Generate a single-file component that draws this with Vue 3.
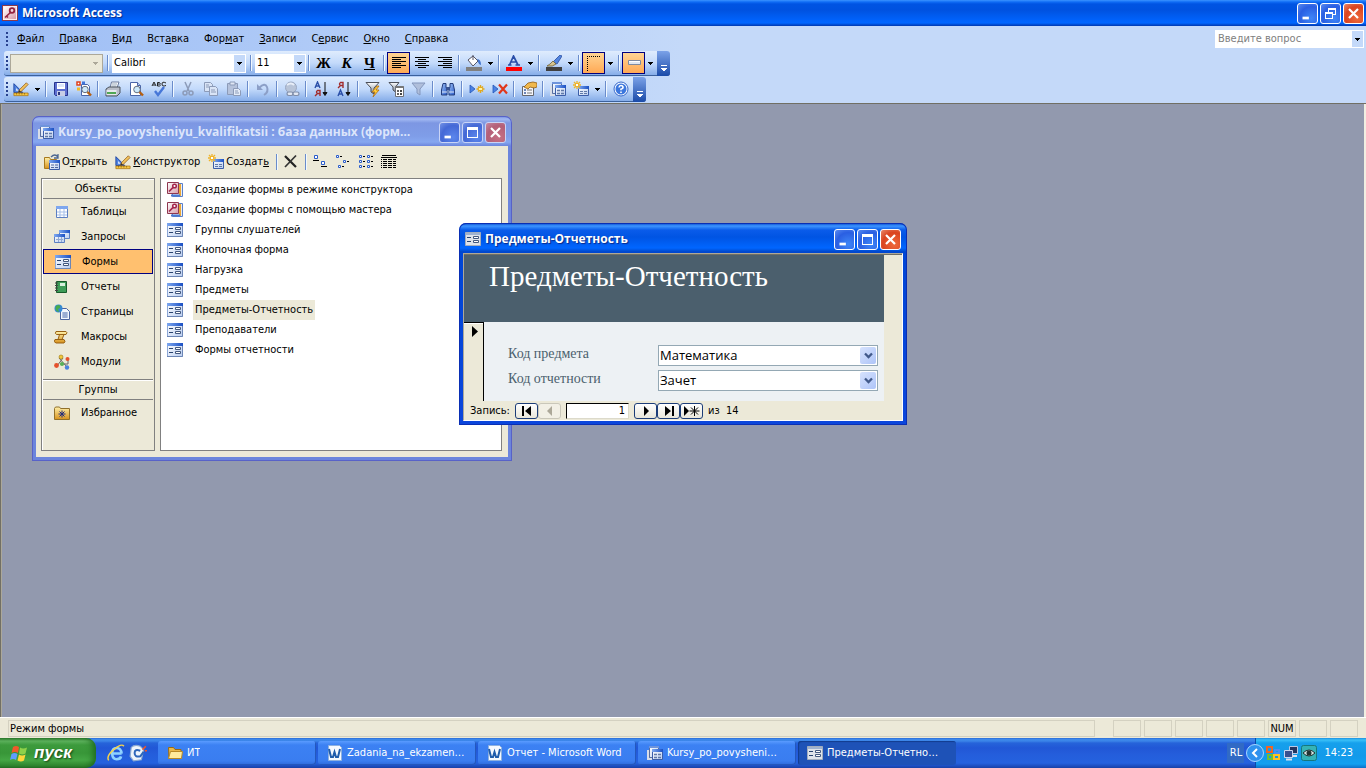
<script setup>
import { ref } from 'vue'

const menu = [
  ['', 'Ф', 'айл'],
  ['', 'П', 'равка'],
  ['', 'В', 'ид'],
  ['Вст', 'а', 'вка'],
  ['Фор', 'м', 'ат'],
  ['', 'З', 'аписи'],
  ['С', 'е', 'рвис'],
  ['', 'О', 'кно'],
  ['', 'С', 'правка'],
]

const standardBar = [
  { icon: 'design', label: 'Вид', arrow: true }, null,
  { icon: 'save', label: 'Сохранить' },
  { icon: 'search', label: 'Поиск файлов' }, null,
  { icon: 'print', label: 'Печать' },
  { icon: 'preview', label: 'Просмотр' },
  { icon: 'spell', label: 'Орфография' }, null,
  { icon: 'cut', label: 'Вырезать', off: true },
  { icon: 'copy', label: 'Копировать', off: true },
  { icon: 'paste', label: 'Вставить', off: true }, null,
  { icon: 'undo', label: 'Отменить', off: true }, null,
  { icon: 'link', label: 'Гиперссылка', off: true }, null,
  { icon: 'sort-asc', label: 'По возрастанию' },
  { icon: 'sort-desc', label: 'По убыванию' }, null,
  { icon: 'filter-sel', label: 'Фильтр по выделенному' },
  { icon: 'filter-form', label: 'Изменить фильтр' },
  { icon: 'filter', label: 'Применить фильтр' }, null,
  { icon: 'find', label: 'Найти' }, null,
  { icon: 'rec-new', label: 'Новая запись' },
  { icon: 'rec-del', label: 'Удалить запись' }, null,
  { icon: 'props', label: 'Свойства' }, null,
  { icon: 'db', label: 'Окно базы данных' },
  { icon: 'new-object', label: 'Новый объект', arrow: true }, null,
  { icon: 'help', label: 'Справка' },
]

const colorTools = [
  { icon: 'fill', label: 'Цвет заливки' },
  { icon: 'font-color', label: 'Цвет текста' },
  { icon: 'line-color', label: 'Цвет линии' },
  { icon: 'border', label: 'Толщина линии', on: true },
  { icon: 'effect', label: 'Оформление', on: true },
]

const objects = [
  ['table', 'Таблицы'],
  ['query', 'Запросы'],
  ['form', 'Формы'],
  ['report', 'Отчеты'],
  ['page', 'Страницы'],
  ['macro', 'Макросы'],
  ['module', 'Модули'],
]
const currentObject = ref('Формы')

const items = [
  ['wizard', 'Создание формы в режиме конструктора'],
  ['wizard', 'Создание формы с помощью мастера'],
  ['form', 'Группы слушателей'],
  ['form', 'Кнопочная форма'],
  ['form', 'Нагрузка'],
  ['form', 'Предметы'],
  ['form', 'Предметы-Отчетность'],
  ['form', 'Преподаватели'],
  ['form', 'Формы отчетности'],
]
const currentItem = ref('Предметы-Отчетность')

const fields = [
  { id: 'subject', label: 'Код предмета', value: 'Математика' },
  { id: 'report', label: 'Код отчетности', value: 'Зачет' },
]

const tasks = [
  { icon: 'folder', text: 'ИТ' },
  { icon: 'word', text: 'Zadania_na_ekzamen…' },
  { icon: 'word', text: 'Отчет - Microsoft Word' },
  { icon: 'db', text: 'Kursy_po_povysheni…' },
  { icon: 'form-gray', text: 'Предметы-Отчетно…', active: true },
]
const indicators = ['', '', '', '', '', 'NUM', '', '']
</script>

<template>
  <div class="screen">
    <svg class="defs" aria-hidden="true">
      <defs>
        <linearGradient id="gBlue" x1="0" y1="0" x2="1" y2="1"><stop offset="0" stop-color="#9fc3f7" /><stop offset="1" stop-color="#2a5ccb" /></linearGradient>
        <linearGradient id="gHead" x1="0" y1="0" x2="1" y2="0"><stop offset="0" stop-color="#7fa9f0" /><stop offset="1" stop-color="#1b50c4" /></linearGradient>
        <linearGradient id="gPaper" x1="0" y1="0" x2="1" y2="1"><stop offset="0" stop-color="#ffffff" /><stop offset="1" stop-color="#b9cdf0" /></linearGradient>
        <linearGradient id="gGold" x1="0" y1="0" x2="0" y2="1"><stop offset="0" stop-color="#fff0a8" /><stop offset="1" stop-color="#d8921c" /></linearGradient>
        <linearGradient id="gGray" x1="0" y1="0" x2="0" y2="1"><stop offset="0" stop-color="#ffffff" /><stop offset="1" stop-color="#7d8794" /></linearGradient>
        <linearGradient id="gRose" x1="0" y1="0" x2="1" y2="1"><stop offset="0" stop-color="#ffffff" /><stop offset="1" stop-color="#d79aa8" /></linearGradient>
        <symbol id="i-key" viewBox="0 0 16 16">
          <rect x=".5" y=".5" width="15" height="15" fill="#fbeef0" stroke="#8a3a4c" /><rect x="2" y="2" width="12" height="12" fill="url(#gRose)" />
          <circle cx="10" cy="5.500" r="2.300" fill="#f3dbe0" stroke="#94213f" stroke-width="1.800" /><path d="M8.500 7.500 3 12.500M4.500 11l1.500 1.500" stroke="#94213f" stroke-width="1.600" />
        </symbol>
        <symbol id="i-design" viewBox="0 0 18 16">
          <path d="M1 2v10h10z" fill="#4f82e0" stroke="#173f9e" /><path d="M3.500 7v3h3z" fill="#e6effd" />
          <path d="m7 9 8-8 2 2-8 8-3 1z" fill="#f2c25c" stroke="#87520f" stroke-width=".8" /><path d="m6 12 1-3 2 2z" fill="#333" />
          <path d="M1 12.500h16v3H1z" fill="#f6c741" stroke="#a6700c" stroke-width=".8" /><path d="M4 13v1M7 13v1M10 13v1M13 13v1" stroke="#5e3d00" />
        </symbol>
        <symbol id="i-save" viewBox="0 0 16 16"><path d="M1.500 1.500h13v13h-12l-1-1z" fill="#5d6fd0" stroke="#27328d" /><path d="M4 2h8v6H4z" fill="#fff" /><path d="M5 3h6v3H5z" fill="#dce6fb" /><path d="M4 10h8v5H4z" fill="#c7cde6" /><path d="M5 11h2v3H5z" fill="#29337d" /></symbol>
        <symbol id="i-search" viewBox="0 0 16 16">
          <path d="M5.500 3.500h6l2 2v9h-8z" fill="#fff" stroke="#4a65a8" /><path d="M1 1h3v3H1z" fill="#fff" stroke="#e0401c" stroke-width="1.500" /><path d="M6 .5h3v3H6z" fill="#3f75db" /><path d="M1 6.500h3v3H1z" fill="#f3bb28" />
          <circle cx="9" cy="8.500" r="3.200" fill="#cfe9fb" stroke="#666f80" /><path d="m11.500 11 3.500 3.500" stroke="#b45f12" stroke-width="2.400" />
        </symbol>
        <symbol id="i-print" viewBox="0 0 16 16"><path d="m5 7 1.500-6H14l-2 6z" fill="#fff" stroke="#6a7a9b" /><path d="M7 3h5M6.500 5h5" stroke="#9ab" /><path d="M1 8l3-2h11v6l-3 3H1z" fill="#b9bec8" stroke="#4d545f" /><path d="M1.500 9h10v5h-10z" fill="#e7e9ee" /><path d="M2 11h9v2H2z" fill="#4fa654" /></symbol>
        <symbol id="i-preview" viewBox="0 0 16 16"><path d="M2.500 1.500h7l3 3v10h-10z" fill="#fff" stroke="#4a65a8" /><path d="M9.500 1.500v3h3" fill="#b9cdf0" stroke="#4a65a8" /><circle cx="9" cy="8.500" r="3.300" fill="#cdeafb" stroke="#666f80" /><path d="m11.500 11 3.500 3.500" stroke="#b45f12" stroke-width="2.400" /></symbol>
        <symbol id="i-spell" viewBox="0 0 16 16"><g fill="none" stroke="#222" stroke-width="1"><path d="m1 5 2-4 2 4M2 4h2M6.500 5V1.500h2q1.500 1 0 1.700 2 1 0 1.800zM6.500 3h2M15 2q-4-2-4 1t4 1.500" /></g><path d="m4 10 3 4 6-8" fill="none" stroke="#4777d8" stroke-width="2.400" /></symbol>
        <symbol id="i-cut" viewBox="0 0 16 16"><path d="m5 1 4 9M11 1 7 10" stroke="#8c9bb8" stroke-width="1.500" /><circle cx="5" cy="12" r="2" fill="none" stroke="#8c9bb8" stroke-width="1.500" /><circle cx="11" cy="12" r="2" fill="none" stroke="#8c9bb8" stroke-width="1.500" /></symbol>
        <symbol id="i-copy" viewBox="0 0 16 16"><g fill="#d9e4f6" stroke="#8c9bb8"><path d="M1.500 1.500h6l2 2v7h-8z" /><path d="M6.500 5.500h6l2 2v7h-8z" /></g><path d="M3 4h3M3 6h3M8 9h4M8 11h5" stroke="#8c9bb8" /></symbol>
        <symbol id="i-paste" viewBox="0 0 16 16"><path d="M1.500 2.500h10v11h-10z" fill="#b5c2db" stroke="#8c9bb8" /><path d="M4 1h5v3H4z" fill="#dfe6f3" stroke="#8c9bb8" /><path d="M7.500 7.500h5l2 2v5h-7z" fill="#e3ebf8" stroke="#8c9bb8" /><path d="M9 10h3M9 12h4" stroke="#8c9bb8" /></symbol>
        <symbol id="i-undo" viewBox="0 0 16 16"><path d="M4 7q6-6 8-1t-3 8" fill="none" stroke="#8c9fc7" stroke-width="2" /><path d="M2 3v6h6z" fill="#8c9fc7" /></symbol>
        <symbol id="i-link" viewBox="0 0 16 16"><circle cx="7" cy="6.500" r="5.500" fill="#b8c4d8" stroke="#9aa8c2" /><path d="M3 4q4-3 7 0" fill="none" stroke="#e8eef8" stroke-width="2" /><g fill="#e2e8f3" stroke="#7f8da9" stroke-width="1.200"><rect x="3" y="11" width="6" height="3.500" rx="1.700" /><rect x="9" y="11" width="6" height="3.500" rx="1.700" /></g></symbol>
        <symbol id="i-sort-asc" viewBox="0 0 16 16"><path d="m2 7 2.500-6L7 7M3 5h3" fill="none" stroke="#2b4fa8" stroke-width="1.400" /><path d="M7 15V9.500H4.500q-2 1.500 0 3H7M4.500 12.500 2 15" fill="none" stroke="#a12c2c" stroke-width="1.400" /><path d="M12 1v12M10 11.500l2 3 2-3z" stroke="#111" fill="#111" /></symbol>
        <symbol id="i-sort-desc" viewBox="0 0 16 16"><path d="m2 15 2.500-6L7 15M3 13h3" fill="none" stroke="#2b4fa8" stroke-width="1.400" /><path d="M7 7V1.500H4.500q-2 1.500 0 3H7M4.500 4.500 2 7" fill="none" stroke="#a12c2c" stroke-width="1.400" /><path d="M12 1v12M10 11.500l2 3 2-3z" stroke="#111" fill="#111" /></symbol>
        <symbol id="i-filter-sel" viewBox="0 0 16 16"><path d="M1 1.500h13L9 7v6l-3-2V7z" fill="url(#gGray)" stroke="#4b4f58" /><path d="m12 5-5 6h3l-2 5 6-7h-3l3-4z" fill="#ffd13a" stroke="#b4690a" stroke-width=".8" /></symbol>
        <symbol id="i-filter-form" viewBox="0 0 16 16"><path d="M1 1.500h10L7.500 6v5L5 9V6z" fill="url(#gGray)" stroke="#4b4f58" /><path d="M7.500 5.500h8v10h-8z" fill="#fff" stroke="#6c7078" /><path d="M7.500 5h8v2h-8z" fill="#777" /><path d="M9 10h2M9 13h2" stroke="#333" stroke-width="1.500" /><path d="M12 9h2v2h-2zM12 12h2v2h-2z" fill="#444" /></symbol>
        <symbol id="i-filter" viewBox="0 0 16 16"><path d="M1 2h13L9 8v6l-3-2V8z" fill="#b0bfdb" stroke="#8497bd" /></symbol>
        <symbol id="i-find" viewBox="0 0 16 16"><g fill="url(#gBlue)" stroke="#253e7c"><path d="M3 2.500h3V6l1 3v5H1.500V9z" /><path d="M10 2.500h3L14.500 9v5H9V9l1-3z" /></g><path d="M6 6h4v3H6z" fill="#37528f" /><path d="M2 11h5M9 11h5" stroke="#dfe9fb" /></symbol>
        <symbol id="i-rec-new" viewBox="0 0 16 16"><path d="m1 4 5 4-5 4z" fill="#4b82e4" stroke="#2456b8" stroke-width=".8" /><path d="M11.500 4v8M7.500 8h8M9 5.500l5 5M14 5.500l-5 5" stroke="#e4a818" stroke-width="1.500" /><path d="M10 7h3v2h-3z" fill="#fff3a4" /></symbol>
        <symbol id="i-rec-del" viewBox="0 0 16 16"><path d="m1 4 5 4-5 4z" fill="#4b82e4" stroke="#2456b8" stroke-width=".8" /><path d="m7 3.500 8 9M15 3.500l-8 9" stroke="#e0371b" stroke-width="2.200" /></symbol>
        <symbol id="i-props" viewBox="0 0 16 16"><path d="M1.500 5.500h11v9h-11z" fill="#f4f6fb" stroke="#65676d" /><path d="M3 8h2v2H3zM3 11h2v2H3z" fill="#6c85b8" /><path d="M6 9h5M6 12h5" stroke="#777" /><path d="m3 6 4-4 5-1 4 1v4l-3 1-4-1-2 2z" fill="#f0b84d" stroke="#8f5a12" stroke-width=".8" /></symbol>
        <symbol id="i-db" viewBox="0 0 16 16"><path d="M2.500 1.500h9v11h-9z" fill="url(#gPaper)" stroke="#5a6f9e" /><path d="M1 5v9h4" fill="none" stroke="#d8dde8" stroke-width="2" /><path d="M2 1h10v2H2z" fill="#6f94db" /><path d="M5.500 4.500h10v10h-10z" fill="url(#gPaper)" stroke="#3c5ea8" /><path d="M5 4h11v3H5z" fill="url(#gHead)" /><path d="M7 9.500h3M11 9.500h3M7 12.500h3M11 12.500h3" stroke="#6079a8" stroke-width="1.500" /></symbol>
        <symbol id="i-new-object" viewBox="0 0 16 16"><path d="M5.500 5.500h10v9h-10z" fill="url(#gPaper)" stroke="#3c5ea8" /><path d="M5 5h11v3H5z" fill="url(#gHead)" /><path d="M7 10.500h3M11 10.500h3M7 12.500h3M11 12.500h3" stroke="#6079a8" /><path d="M4 0v8M0 4h8M1 1l6 6M7 1 1 7" stroke="#f0b429" stroke-width="1.300" /><path d="M3 3h2v2H3z" fill="#fff" /></symbol>
        <symbol id="i-help" viewBox="0 0 16 16"><circle cx="8" cy="8" r="7" fill="#f5f9ff" stroke="#3768c9" /><circle cx="8" cy="8" r="5.500" fill="#3b76dd" /><path d="M6 6.500q.3-2 2-2t2 1.500-2 2.200v1M8 10.500V12" fill="none" stroke="#fff" stroke-width="1.600" /></symbol>
        <symbol id="i-fill" viewBox="0 0 16 16"><path d="m2 5 5-4 5 5-5 5z" fill="#fff" stroke="#556" /><path d="M7 5V0" stroke="#556" /><path d="M11 4q4 0 4 6-3-1-3-4z" fill="#3f74cf" /><path d="M0 12h16v4H0z" fill="#808080" /></symbol>
        <symbol id="i-font-color" viewBox="0 0 16 16"><path d="m3.500 10 4-9 4.500 9M5 7h5M2 10h3.500M9.500 10H14" fill="none" stroke="#2b4fa8" stroke-width="1.700" /><path d="M0 12h16v4H0z" fill="#f00" /></symbol>
        <symbol id="i-line-color" viewBox="0 0 16 16"><path d="m7 7 7-7 2 1-5 8z" fill="#5386df" stroke="#294d9f" stroke-width=".8" /><path d="m4 9 3-3 3 3q-3 3-9 2z" fill="#d6c48f" stroke="#6e6137" stroke-width=".8" /><path d="M0 12h16v4H0z" fill="#404040" /></symbol>
        <symbol id="i-border" viewBox="0 0 16 16"><path d="M1 1.500h14M1.500 1v15" stroke="#000" stroke-dasharray="1 1" shape-rendering="crispEdges" /></symbol>
        <symbol id="i-effect" viewBox="0 0 16 16"><path d="M2.500 5.500h12v4h-12z" fill="#dfe6f0" stroke="#7e8aa0" /><path d="M3 6.500h11" stroke="#fff" /></symbol>
        <symbol id="i-left" viewBox="0 0 16 14"><path d="M1 1.500h14M1 3.500h9M1 5.500h14M1 7.500h9M1 9.500h14M1 11.500h9" stroke="#000" shape-rendering="crispEdges" /></symbol>
        <symbol id="i-center" viewBox="0 0 16 14"><path d="M1 1.500h14M4 3.500h8M1 5.500h14M4 7.500h8M1 9.500h14M4 11.500h8" stroke="#000" shape-rendering="crispEdges" /></symbol>
        <symbol id="i-right" viewBox="0 0 16 14"><path d="M1 1.500h14M6 3.500h9M1 5.500h14M6 7.500h9M1 9.500h14M6 11.500h9" stroke="#000" shape-rendering="crispEdges" /></symbol>
        <symbol id="i-open" viewBox="0 0 16 16"><path d="M.5 3.500h5l1 2h6v9H.5z" fill="url(#gGold)" stroke="#a8791d" /><path d="M7 3q4-4 7 0M14 0v4h-4" fill="none" stroke="#4d6791" stroke-width="1.300" /><path d="M5.500 7.500h10v8h-10z" fill="url(#gPaper)" stroke="#3c5ea8" /><path d="M5 6h11v3H5z" fill="url(#gHead)" /><path d="M7 11h3M11 11h3M7 13.500h3M11 13.500h3" stroke="#52699a" /></symbol>
        <symbol id="i-delete" viewBox="0 0 16 16"><path d="m2 2 11 11" stroke="#222" stroke-width="2.200" /><path d="M13 1.500 2 13" stroke="#333" stroke-width="1.700" /></symbol>
        <symbol id="i-large" viewBox="0 0 16 16"><path d="M2.500 1.500h3v3h-3zM9.500 7.500h3v3h-3z" fill="#fff" stroke="#2a5ccb" /><path d="M1 6.500h6M9 12.500h6" stroke="#000" shape-rendering="crispEdges" /></symbol>
        <symbol id="i-small" viewBox="0 0 16 16"><path d="M1.500 1.500h2v2h-2zM8.500 6.500h2v2h-2zM3.500 11.500h2v2h-2z" fill="#fff" stroke="#2a5ccb" /><path d="M5 2.500h3M12 7.500h3M7 12.500h3" stroke="#000" stroke-dasharray="2 1" shape-rendering="crispEdges" /></symbol>
        <symbol id="i-list" viewBox="0 0 16 16"><path d="M1.500 1.500h2v2h-2zM1.500 6.500h2v2h-2zM1.500 11.500h2v2h-2zM9.500 1.500h2v2h-2zM9.500 6.500h2v2h-2zM9.500 11.500h2v2h-2z" fill="#fff" stroke="#2a5ccb" /><path d="M5 2.500h3M5 7.500h3M5 12.500h3M13 2.500h3M13 7.500h3M13 12.500h3" stroke="#000" stroke-dasharray="2 1" shape-rendering="crispEdges" /></symbol>
        <symbol id="i-details" viewBox="0 0 16 16"><g stroke="#000" shape-rendering="crispEdges"><path d="M1 1.500h14M0 3.500h16" /><path d="M0 5.500h16M0 7.500h16M0 9.500h16M0 11.500h16M0 13.500h16" stroke-dasharray="1 1 4 1 4 1 3 1" /></g></symbol>
        <symbol id="i-table" viewBox="0 0 16 16"><path d="M2.500 2.500h11v11h-11z" fill="#fff" stroke="#5c7fc2" /><path d="M2 2h12v3H2z" fill="#7ea7ee" /><path d="M3 8h10M3 11h10M6 5v8M10 5v8" stroke="#a5bfe9" /></symbol>
        <symbol id="i-query" viewBox="0 0 16 16"><path d="M5.500 1.500h10v8h-10z" fill="url(#gPaper)" stroke="#5c7fc2" /><path d="M5 1h11v3H5z" fill="url(#gHead)" /><path d="M.5 5.500h10v8H.5z" fill="url(#gPaper)" stroke="#5c7fc2" /><path d="M0 5h11v3H0z" fill="url(#gHead)" /><path d="M2 10.500h7M4.500 8v5M7.500 8v5" stroke="#92a9d2" /></symbol>
        <symbol id="i-form" viewBox="0 0 16 14"><path d="M.5.500h15v13H.5z" fill="url(#gPaper)" stroke="#8da8d8" /><path d="M0 0h16v3H0z" fill="url(#gHead)" /><path d="M15.500 3v10.500H0" fill="none" stroke="#6c86b6" /><path d="M2 5.500h4M2 9.500h4" stroke="#29436f" /><path d="M8.500 4.500h5v2h-5zM8.500 8.500h5v2h-5z" fill="#fff" stroke="#43587e" /></symbol>
        <symbol id="i-form-gray" viewBox="0 0 16 14"><path d="M.5.500h15v13H.5z" fill="#dfe3ea" stroke="#a3adbd" /><path d="M1 1h14v2H1z" fill="#9fb2d0" /><path d="M2 5.500h4M2 9.500h4" stroke="#29436f" /><path d="M8.500 4.500h5v2h-5zM8.500 8.500h5v2h-5z" fill="#fff" stroke="#43587e" /></symbol>
        <symbol id="i-report" viewBox="0 0 16 16"><path d="M2.500 2.500h10v11h-10z" fill="#3d9c57" stroke="#175a2b" /><path d="M6 4h5v3H6z" fill="#d7f0dc" /><path d="M1 4h3M1 6.500h3M1 9h3M1 11.500h3" stroke="#444" /></symbol>
        <symbol id="i-page" viewBox="0 0 16 16"><path d="M6.500 4.500h6l3 3v8h-9z" fill="#f3f7fe" stroke="#4c64a0" /><path d="M8 9h6M8 11h6M8 13h6M10 8v6M12 8v6" stroke="#7d93c4" /><circle cx="4.500" cy="4.500" r="4" fill="#3688d4" /><path d="M2 2q3-2 4 0T4 5l1 3Q0 7 2 2z" fill="#49ac4c" /></symbol>
        <symbol id="i-macro" viewBox="0 0 16 16"><path d="M2 2.500h10q2 1 0 3h-2l-2 5h2q2 2 0 3.500H2q-3-1-1-3.500h3l1.500-5H2.500q-2-1-.5-3z" fill="url(#gGold)" stroke="#986113" /><path d="M4 5.500h6M2 10.500h6" stroke="#986113" /></symbol>
        <symbol id="i-module" viewBox="0 0 16 16"><path d="m3 12 6-8M5 4l8 9M6 10h8V5" stroke="#666" fill="none" /><circle cx="7" cy="3" r="2" fill="#f1c83a" stroke="#9b7611" stroke-width=".6" /><circle cx="13.500" cy="5" r="2" fill="#e5512c" /><circle cx="2.500" cy="11.500" r="2.400" fill="#e5512c" /><circle cx="8" cy="10" r="2" fill="#58b158" /><circle cx="13" cy="13.500" r="2.200" fill="#4a82df" /></symbol>
        <symbol id="i-fav" viewBox="0 0 16 14"><path d="M.5 2.500l1-1.500h4l1 1.500h9v11H.5z" fill="url(#gGold)" stroke="#91702a" /><path d="M8 4.500v7M4.500 8h7M5.500 5.500l5 5M10.500 5.500l-5 5" stroke="#242d7c" /></symbol>
        <symbol id="i-wizard" viewBox="0 0 16 16"><path d="M5.500 1.500h10v13h-10z" fill="#e9effa" stroke="#5a7fc9" /><path d="M13 2v12" stroke="#e8a637" stroke-width="2" /><path d="M4 13.500h9" stroke="#4d7ad0" stroke-width="2" /><path d="M.5.500h11v11H.5z" fill="url(#gRose)" stroke="#8f3750" /><circle cx="7.500" cy="4" r="1.800" fill="#fff" stroke="#a3224a" stroke-width="1.500" /><path d="m6 5.500-4 4" stroke="#a3224a" stroke-width="1.700" /></symbol>
        <symbol id="i-folder" viewBox="0 0 16 16"><path d="M1.500 2.500h5l1.500 2h6v9h-12z" fill="#e8b84a" stroke="#9a6b12" /><path d="m1.500 13.500 2-7h12l-1 7z" fill="#ffeb9c" stroke="#b98a24" /></symbol>
        <symbol id="i-word" viewBox="0 0 16 16"><path d="M1.500.500h11l2 2v13h-13z" fill="#f5f9ff" stroke="#8fb1df" /><path d="m2 4 2 8h2l1.500-5L9 12h2l2-8" fill="none" stroke="#1f5cac" stroke-width="2" /></symbol>
        <symbol id="i-ie" viewBox="0 0 16 16"><path d="M13 8.500H4.500q0-5 4-5t4.500 5M4.500 8.500q.5 5 4 5t4-2.500" fill="none" stroke="#8fd2ff" stroke-width="2.300" /><path d="M1.500 14.500Q-1 11 6 5t9-3" fill="none" stroke="#f4d24d" stroke-width="1.300" /></symbol>
        <symbol id="i-outlook" viewBox="0 0 16 16"><path d="M2 3q3-3 8-1l3 3-2 9-7 1-3-4z" fill="#eef5fc" stroke="#8aa9d2" /><path d="M10 6q-5-2-5 2t5 3l3-4" fill="none" stroke="#2e67ba" stroke-width="1.800" /><path d="m12 5 3-3M14 6h2" stroke="#e8572f" stroke-width="1.500" /></symbol>
        <symbol id="i-office" viewBox="0 0 16 16"><g fill="none" stroke-width="2"><path d="M2 2h5v5H2z" stroke="#f26522" /><path d="M10 5h4v3h-4z" stroke="#4c8ff0" /><path d="M3 10h4v4H3z" stroke="#6fbf35" /><path d="M9 10h5v4H9z" stroke="#ffc221" /></g></symbol>
        <symbol id="i-net" viewBox="0 0 16 16"><path d="M6.500 1.500h8v7h-8z" fill="#25355f" stroke="#b9c7e5" /><path d="M1.500 5.500h8v7h-8z" fill="#39508f" stroke="#cbd7ef" /><path d="M3 14.500h6M10 11h4" stroke="#d9e0ef" stroke-width="2" /></symbol>
        <symbol id="i-eye" viewBox="0 0 16 16"><rect x=".5" y=".5" width="15" height="15" rx="2" fill="#35b3b6" stroke="#16777d" /><path d="M2 8q6-6 12 0-6 6-12 0z" fill="#d8e8e6" stroke="#233" /><circle cx="8" cy="8" r="2.500" fill="#233" /></symbol>
        <symbol id="i-min" viewBox="0 0 21 21"><path d="M5 14h7v3H5z" fill="#fff" /></symbol>
        <symbol id="i-max" viewBox="0 0 19 19"><path d="M4.500 5.500h10v9h-10z" fill="none" stroke="#fff" shape-rendering="crispEdges" /><path d="M4 4h11v3H4z" fill="#fff" /></symbol>
        <symbol id="i-restore" viewBox="0 0 19 19"><path d="M7.500 8V4.500h7v6H12M4.500 8.500h7v6h-7z" fill="none" stroke="#fff" shape-rendering="crispEdges" /><path d="M7 4h8v2H7zM4 8h8v2H4z" fill="#fff" /></symbol>
        <symbol id="i-close" viewBox="0 0 19 19"><path d="m5 5 9 9M14 5l-9 9" stroke="#fff" stroke-width="2.200" /></symbol>
        <symbol id="i-tri" viewBox="0 0 5 3"><path d="M0 0h5v1H4v1H3v1H2V2H1V1H0z" fill="currentColor" shape-rendering="crispEdges" /></symbol>
        <symbol id="i-cap" viewBox="0 0 6 8"><path d="M0 0h6v1H0zM0 3h6v1H5v1H4v1H2V5H1V4H0z" fill="#fff" shape-rendering="crispEdges" /></symbol>
        <symbol id="i-chev" viewBox="0 0 9 7"><path d="m1 1.500 3.500 3.500L8 1.500" fill="none" stroke="#41598a" stroke-width="2.300" /></symbol>
      </defs>
    </svg>

    <header class="caption main-caption">
      <svg class="ico"><use href="#i-key" /></svg>
      <h1 class="caption-text">Microsoft Access</h1>
      <button class="cb" aria-label="Свернуть"><svg><use href="#i-min" /></svg></button>
      <button class="cb" aria-label="Восстановить"><svg><use href="#i-restore" /></svg></button>
      <button class="cb cb-close" aria-label="Закрыть"><svg><use href="#i-close" /></svg></button>
    </header>

    <div class="bars">
      <nav class="menubar">
        <span class="grip"></span>
        <button v-for="m in menu" :key="m.join('')" class="menu-item">{{ m[0] }}<u>{{ m[1] }}</u>{{ m[2] }}</button>
        <div class="ask">
          <input type="text" placeholder="Введите вопрос" aria-label="Введите вопрос" />
          <button class="ask-arrow" aria-label="Список вопросов"><svg class="tri"><use href="#i-tri" /></svg></button>
        </div>
      </nav>

      <div class="toolbar" role="toolbar" aria-label="Форматирование">
        <span class="grip"></span>
        <div class="combo combo-off"><select disabled aria-label="Объект"><option></option></select><svg class="tri"><use href="#i-tri" /></svg></div>
        <i class="sep wide"></i>
        <div class="combo combo-font"><select aria-label="Шрифт"><option>Calibri</option></select><svg class="tri"><use href="#i-tri" /></svg></div>
        <i class="sep wide"></i>
        <div class="combo combo-size"><select aria-label="Размер"><option>11</option></select><svg class="tri"><use href="#i-tri" /></svg></div>
        <i class="sep"></i>
        <button class="tb letter">Ж</button>
        <button class="tb letter slant">К</button>
        <button class="tb letter under">Ч</button>
        <i class="sep"></i>
        <button class="tb on" aria-label="По левому краю"><svg class="align"><use href="#i-left" /></svg></button>
        <button class="tb" aria-label="По центру"><svg class="align"><use href="#i-center" /></svg></button>
        <button class="tb" aria-label="По правому краю"><svg class="align"><use href="#i-right" /></svg></button>
        <template v-for="t in colorTools" :key="t.icon">
          <i class="sep"></i>
          <button class="tb" :class="{ on: t.on }" :aria-label="t.label"><svg class="ico"><use :href="'#i-' + t.icon" /></svg></button>
          <button class="tb-arrow" :aria-label="t.label + ': список'"><svg class="tri"><use href="#i-tri" /></svg></button>
        </template>
        <button class="cap" aria-label="Параметры панели"><svg><use href="#i-cap" /></svg></button>
      </div>

      <div class="toolbar" role="toolbar" aria-label="Режим формы">
        <span class="grip"></span>
        <template v-for="(t, n) in standardBar" :key="n">
          <i v-if="!t" class="sep"></i>
          <template v-else>
            <button class="tb" :disabled="t.off" :aria-label="t.label"><svg class="ico"><use :href="'#i-' + t.icon" /></svg></button>
            <button v-if="t.arrow" class="tb-arrow" :aria-label="t.label + ': список'"><svg class="tri"><use href="#i-tri" /></svg></button>
          </template>
        </template>
        <button class="cap" aria-label="Параметры панели"><svg><use href="#i-cap" /></svg></button>
      </div>
    </div>

    <main class="workspace">
      <section class="window db-window">
        <header class="caption">
          <svg class="ico"><use href="#i-db" /></svg>
          <h2 class="caption-text">Kursy_po_povysheniyu_kvalifikatsii : база данных (форм…</h2>
          <button class="cb" aria-label="Свернуть"><svg><use href="#i-min" /></svg></button>
          <button class="cb" aria-label="Развернуть"><svg><use href="#i-max" /></svg></button>
          <button class="cb cb-close" aria-label="Закрыть"><svg><use href="#i-close" /></svg></button>
        </header>
        <div class="db-body">
          <div class="db-tools">
            <button class="db-btn"><svg class="ico"><use href="#i-open" /></svg><span>О<u>т</u>крыть</span></button>
            <button class="db-btn"><svg class="ico"><use href="#i-design" /></svg><span><u>К</u>онструктор</span></button>
            <button class="db-btn"><svg class="ico"><use href="#i-new-object" /></svg><span>Создат<u>ь</u></span></button>
            <i class="sep"></i>
            <button class="tb" aria-label="Удалить"><svg class="ico"><use href="#i-delete" /></svg></button>
            <i class="sep"></i>
            <button v-for="v in ['large', 'small', 'list', 'details']" :key="v" class="tb" :aria-label="v"><svg class="ico"><use :href="'#i-' + v" /></svg></button>
          </div>
          <div class="db-panes">
            <aside class="objects">
              <h3 class="group-head">Объекты</h3>
              <button v-for="o in objects" :key="o[1]" class="object" :class="{ current: o[1] === currentObject }" @click="currentObject = o[1]">
                <svg class="ico"><use :href="'#i-' + o[0]" /></svg>{{ o[1] }}
              </button>
              <h3 class="group-head second">Группы</h3>
              <button class="object"><svg class="ico"><use href="#i-fav" /></svg>Избранное</button>
            </aside>
            <ul class="items">
              <li v-for="i in items" :key="i[1]">
                <button class="item" :class="{ current: i[1] === currentItem }" @click="currentItem = i[1]">
                  <svg class="ico"><use :href="'#i-' + i[0]" /></svg><span>{{ i[1] }}</span>
                </button>
              </li>
            </ul>
          </div>
        </div>
      </section>

      <section class="window form-window active">
        <header class="caption">
          <svg class="ico"><use href="#i-form-gray" /></svg>
          <h2 class="caption-text">Предметы-Отчетность</h2>
          <button class="cb" aria-label="Свернуть"><svg><use href="#i-min" /></svg></button>
          <button class="cb" aria-label="Развернуть"><svg><use href="#i-max" /></svg></button>
          <button class="cb cb-close" aria-label="Закрыть"><svg><use href="#i-close" /></svg></button>
        </header>
        <div class="form-body">
          <div class="form-head">Предметы-Отчетность</div>
          <div class="form-detail">
            <button class="selector" aria-label="Выделить запись"><svg viewBox="0 0 6 11"><path d="M0 0l6 5.500L0 11z" /></svg></button>
            <div class="fields">
              <div v-for="f in fields" :key="f.id" class="field">
                <label :for="f.id">{{ f.label }}</label>
                <div class="field-combo">
                  <select :id="f.id"><option>{{ f.value }}</option></select>
                  <span class="drop"><svg><use href="#i-chev" /></svg></span>
                </div>
              </div>
            </div>
          </div>
          <div class="record-nav">
            <label for="rec">Запись:</label>
            <button aria-label="Первая"><svg viewBox="0 0 12 10"><path d="M1 0h2v10H1zM10 0v10L4 5z" /></svg></button>
            <button disabled aria-label="Предыдущая"><svg viewBox="0 0 12 10"><path d="M8 0v10L3 5z" /></svg></button>
            <input id="rec" type="text" value="1" />
            <button aria-label="Следующая"><svg viewBox="0 0 12 10"><path d="M4 0v10l5-5z" /></svg></button>
            <button aria-label="Последняя"><svg viewBox="0 0 12 10"><path d="M2 0v10l6-5zM9 0h2v10H9z" /></svg></button>
            <button aria-label="Новая"><svg class="star" viewBox="0 0 17 10"><path d="M1 0v10l5-5z" /><path d="M11.500 0v10M6.500 5h10M8 1.500l7 7M15 1.500l-7 7" stroke="#000" /></svg></button>
            <span class="of">из&nbsp; 14</span>
          </div>
        </div>
      </section>
    </main>

    <footer class="status">
      <span class="mode">Режим формы</span>
      <span v-for="(s, n) in indicators" :key="n" class="ind">{{ s }}</span>
    </footer>

    <nav class="taskbar">
      <button class="start">
        <svg viewBox="0 0 20 20"><path d="M3 4q3-2 6 0L8 10Q5 8 1.500 10z" fill="#f0592b" /><path d="M10 4.500q3 2 7 0L15.500 10.500q-3 2-6.500 0z" fill="#8fd14a" /><path d="M1.500 11q3-2 6 0L6 17q-3-2-6 0z" fill="#5f9dff" /><path d="M9 11.500q3 2 6.500 0L14 17.500q-3 2-6.500 0z" fill="#ffd63a" /></svg>
        <span>пуск</span>
      </button>
      <button class="quick" aria-label="Internet Explorer"><svg class="quick-ico"><use href="#i-ie" /></svg></button>
      <button class="quick" aria-label="Outlook Express"><svg class="quick-ico"><use href="#i-outlook" /></svg></button>
      <div class="tasks">
        <button v-for="t in tasks" :key="t.text" class="task" :class="{ pressed: t.active }">
          <svg class="ico"><use :href="'#i-' + t.icon" /></svg><span>{{ t.text }}</span>
        </button>
      </div>
      <button class="lang">RL</button>
      <div class="tray">
        <button class="tray-toggle" aria-label="Показать значки"><svg viewBox="0 0 18 18"><circle cx="9" cy="9" r="8.500" fill="#2f92ee" stroke="#a9d6ff" /><path d="m11 5-4 4 4 4" fill="none" stroke="#fff" stroke-width="2" /></svg></button>
        <svg class="ico"><use href="#i-office" /></svg>
        <svg class="ico"><use href="#i-net" /></svg>
        <svg class="ico"><use href="#i-eye" /></svg>
        <time>14:23</time>
      </div>
    </nav>
  </div>
</template>

<style>
html, body { margin: 0; height: 100%; overflow: hidden; }
</style>

<style scoped>
.screen {
  display: flex; flex-direction: column; height: 100vh;
  font: 11px/14px "DejaVu Sans Condensed", "Noto Sans", sans-serif; color: #000; background: #ece9d8;
}
.screen * { box-sizing: border-box; }
button, input, select { font: inherit; color: inherit; border: 0; background: none; padding: 0; margin: 0; border-radius: 0; outline: 0; white-space: nowrap; }
select { appearance: none; opacity: 1; }
h1, h2, h3, ul { margin: 0; padding: 0; font: inherit; list-style: none; }
svg { display: block; flex: none; }
.defs { position: absolute; width: 0; height: 0; }
.ico { width: 16px; height: 16px; }
.tri { width: 5px; height: 3px; }

.caption { display: flex; align-items: center; gap: 2px; flex: none; }
.caption-text {
  flex: 1; min-width: 0; padding-left: 2px; white-space: nowrap;
  font: bold 12px/18px "Open Sans", "Noto Sans", sans-serif; color: #fff; text-shadow: 1px 1px 1px #0a2a8a;
}
.main-caption {
  height: 26px; padding: 0 2px;
  background: linear-gradient(#3b93ff 0, #0f6cf5 2px, #0054e3 4px, #0052e0 10px, #0062fb 20px, #0066ff 23px, #0046c8 25px, #0038b0);
}
.cb { width: 21px; height: 21px; flex: none; border: 1px solid #fff; border-radius: 3px; background: radial-gradient(circle at 70% 75%, #3f86f7, #2a5fe2 60%, #5b8cf0); }
.cb svg { width: 19px; height: 19px; }
.cb-close { background: radial-gradient(circle at 70% 75%, #ee6a3c, #da4420 60%, #e88a6c); }

.bars { flex: none; background: linear-gradient(90deg, #9ebef5, #c4d9f9 50%); padding-top: 1px; }
.menubar { display: flex; align-items: center; height: 24px; padding: 0 2px 0 5px; }
.grip { width: 4px; height: 14px; flex: none; background: repeating-linear-gradient(#27418f 0 2px, transparent 2px 4px) 1px 0 / 2px 100% no-repeat; }
.menu-item { height: 20px; padding: 0 7px 0 8px; }
.ask { display: flex; margin-left: auto; width: 149px; height: 18px; background: #fff; padding: 1px; }
.ask input { flex: 1; min-width: 0; padding-left: 2px; }
.ask input::placeholder { color: #808080; opacity: 1; }
.ask-arrow { display: grid; place-items: center; width: 11px; background: #c4d9f9; }

.toolbar {
  display: flex; align-items: center; width: max-content; height: 25px; margin: 0 0 1px 4px; padding-left: 1px;
  border-radius: 3px; border-bottom: 1px solid #3b619c; background: linear-gradient(#dfecfd, #c3dafb 50%, #86ade9);
}
.sep { width: 6px; height: 16px; flex: none; background: linear-gradient(90deg, #6a8ccb 50%, #f1f9ff 50%) 2px 0 / 2px 100% no-repeat; }
.sep.wide { width: 9px; background-position-x: 4px; }
.combo { display: flex; align-items: center; height: 19px; background: #fff; position: relative; }
.combo select { width: 100%; height: 100%; padding: 0 14px 0 2px; }
.combo .tri { position: absolute; right: 4px; z-index: 1; pointer-events: none; }
.combo::after { content: ""; position: absolute; inset: 1px 1px 1px auto; width: 11px; background: #c4d9f9; pointer-events: none; }
.combo-off { width: 93px; margin-left: 1px; border: 1px solid #aca899; background: #ece9d8; color: #aca899; }
.combo-off::after { display: none; }
.combo-font { width: 134px; }
.combo-size { width: 51px; }
.tb { display: grid; place-items: center; width: 23px; height: 22px; flex: none; }
.tb.on { border: 1px solid #000080; background: linear-gradient(#ffd493, #ffa955); }
.align { width: 16px; height: 14px; }
.letter { font: bold 15px/22px "Liberation Serif", serif; }
.slant { font-style: italic; }
.under { text-decoration: underline; }
.tb-arrow { width: 11px; height: 22px; padding-left: 3px; flex: none; }
.cap { align-self: stretch; width: 13px; margin: 0 0 -1px 1px; border-radius: 0 3px 3px 0; background: linear-gradient(#7ba2e8, #1a4aa8); display: grid; place-items: end center; padding-bottom: 3px; }
.cap svg { width: 6px; height: 8px; }

.workspace { position: relative; flex: 1; min-height: 0; background: #9299ae; border: solid #716f64; border-width: 1px 0 0 1px; box-shadow: inset 1px 0 #aca899, inset -2px 0 #f1efe2; }

.window { position: absolute; display: flex; flex-direction: column; border-radius: 7px 7px 0 0; padding: 0 4px 4px; }
.window .caption { height: 30px; padding: 2px 2px 0 2px; }
.db-window {
  left: 31px; top: 12px; width: 480px; height: 345px;
  background: linear-gradient(#6a86dc 0, #a3b9f2 3px, #7d97e3 7px, #7f9de8 20px, #86a7f0 26px, #6c85dc 30px, #6c85dc);
  box-shadow: inset 0 0 0 1px #5862c8;
}
.db-window .caption-text { color: #dce5fb; text-shadow: none; }
.db-window .cb { border-color: #c9d4f6; background: radial-gradient(circle at 70% 75%, #5b86ec, #4468d6 60%, #7593e6); }
.db-window .cb-close { background: radial-gradient(circle at 70% 75%, #c67084, #b35f78 60%, #c58aa5); }
.form-window {
  left: 458px; top: 119px; width: 448px;
  background: linear-gradient(#0042c8 0, #3d95ff 3px, #0a5cea 7px, #0054e3 14px, #0066ff 25px, #0046c8 29px, #0046d6 30px, #0b46dc);
  box-shadow: inset 0 0 0 1px #0a2fb4;
}

.db-body { flex: 1; min-height: 0; display: flex; flex-direction: column; padding: 0 6px 6px 5px; background: #ece9d8; }
.db-tools { display: flex; align-items: center; height: 32px; flex: none; padding-left: 3px; }
.db-btn { display: flex; align-items: center; gap: 2px; margin-right: 8px; }
.db-btn + .sep { margin-left: -3px; }
.db-panes { flex: 1; min-height: 0; display: grid; grid-template-columns: 114px 1fr; gap: 5px; }
.objects { border: 1px solid #808080; box-shadow: inset 1px 1px #fff; padding: 0 1px; }
.group-head { height: 20px; line-height: 20px; text-align: center; border-bottom: 1px solid #808080; }
.group-head.second { margin-top: 5px; height: 21px; border-top: 1px solid #808080; box-shadow: inset 0 1px #fff; }
.object { display: flex; align-items: center; gap: 11px; width: 100%; height: 25px; padding-left: 11px; text-align: left; }
.object.current { background: #ffc06f; border: 1px solid #000080; }
.items { background: #fff; border: 1px solid #808080; padding: 1px 0; overflow: hidden; }
.item { display: flex; align-items: center; height: 20px; gap: 10px; padding-left: 6px; }
.item span { line-height: 20px; padding: 0 2px; }
.item.current span { background: #ece9d8; }

.form-body { border: 1px solid; border-color: #aca899 #fff #fff #aca899; background: #ece9d8; padding: 1px 18px 0 0; box-shadow: inset 0 1px #716f64; }
.form-head { height: 67px; padding: 3px 25px; background: #4b5f6d; color: #fff; font: 29px/36px "Liberation Serif", serif; white-space: nowrap; }
.form-detail { display: flex; height: 79px; background: #edf1f4; }
.selector { width: 20px; border: solid #000; border-width: 1px 1px 0 0; background: #ece9d8; display: flex; justify-content: center; padding: 3px 0 0 3px; box-shadow: inset 0 1px #fff; }
.selector svg { width: 6px; height: 11px; }
.fields { flex: 1; display: flex; flex-direction: column; gap: 4px; padding: 23px 6px 0 24px; }
.field { display: grid; grid-template-columns: 150px 1fr; height: 21px; }
.field label { color: #4b5f6d; font: 14px/18px "Liberation Serif", serif; }
.field-combo { display: flex; border: 1px solid #94a8b4; background: #fff; padding: 1px; }
.field-combo select { flex: 1; min-width: 0; font: 13px/17px "Open Sans", "Noto Sans", sans-serif; }
.drop { width: 16px; height: 17px; display: grid; place-items: center; border-radius: 2px; background: linear-gradient(135deg, #d6e2fd, #aec4f8); }
.drop svg { width: 9px; height: 7px; }
.record-nav { display: flex; align-items: center; height: 19px; padding-left: 6px; white-space: nowrap; }
.record-nav label { width: 45px; }
.record-nav button { display: grid; place-items: center; width: 23px; height: 16px; border: 1px solid #1c3d78; border-radius: 3px; background: linear-gradient(#fff, #e8e6da); }
.record-nav button:disabled { border-color: #c9c7ba; background: #f2f0e6; fill: #aca899; }
.record-nav svg { width: 12px; height: 10px; }
.record-nav .star { width: 17px; }
.record-nav input { width: 63px; height: 16px; margin: 0 5px; padding-right: 3px; text-align: right; background: #fff; border: 1px solid; border-color: #000 #dcdacb #dcdacb #000; }
.of { margin-left: 5px; }

.status { flex: none; display: flex; gap: 3px; height: 21px; padding: 2px 8px 1px; background: #ece9d8; border-top: 1px solid #fff; }
.status span { border: 1px solid #d4d1c1; line-height: 16px; }
.mode { flex: 1; margin-right: 15px; padding-left: 1px; }
.ind { width: 28px; text-align: center; }

.taskbar {
  flex: none; display: flex; align-items: stretch; height: 30px; color: #fff;
  background: linear-gradient(#2562cf 0, #3d89ec 1px, #3b84e8 3px, #2663da 5px, #2157d6 10px, #245ddb 16px, #2562df 25px, #1d4ec0 28px, #1941a5);
}
.start {
  display: flex; align-items: center; gap: 4px; width: 96px; padding-left: 10px; border-radius: 0 10px 10px 0;
  background: linear-gradient(#2d7a2d 0, #5eb35e 3px, #3c9a3c 7px, #389638 15px, #44a644 22px, #2f852f 28px, #236b23); box-shadow: inset -5px 0 6px -2px #1f6b1f;
}
.start svg { width: 20px; height: 20px; }
.start span { font: italic bold 17px/26px "Liberation Sans", sans-serif; text-shadow: 1px 1px 2px #143f14; }
.quick { width: 22px; display: grid; place-items: center; }
.start + .quick { margin-left: 9px; }
.quick-ico { width: 18px; height: 18px; }
.tasks { flex: 1; min-width: 0; display: flex; gap: 2px; padding: 3px 0 3px 9px; }
.task {
  flex: 0 1 158px; min-width: 0; display: flex; align-items: center; gap: 4px; padding: 0 6px 0 9px; border-radius: 3px;
  background: linear-gradient(#5a9bff, #3c81f3 4px, #3a7df0 20px, #2d68da); box-shadow: inset -1px -1px #2458bd;
}
.task span { overflow: hidden; white-space: nowrap; }
.task.pressed { background: #1e52b7; box-shadow: inset 1px 1px 1px #123c8e; }
.lang { width: 17px; margin: 5px 11px 5px 14px; background: #316ac5; }
.tray { position: relative; display: flex; align-items: center; gap: 2px; padding: 0 13px 0 9px; border-left: 1px solid #0b4aa8; background: linear-gradient(#1c8fe0 0, #39c0f8 2px, #16a0ec 5px, #129aea 18px, #12a0f0 26px, #0e70c8); }
.tray-toggle { position: absolute; left: -10px; }
.tray-toggle svg { width: 18px; height: 18px; }
.tray time { margin-left: 5px; }
</style>
